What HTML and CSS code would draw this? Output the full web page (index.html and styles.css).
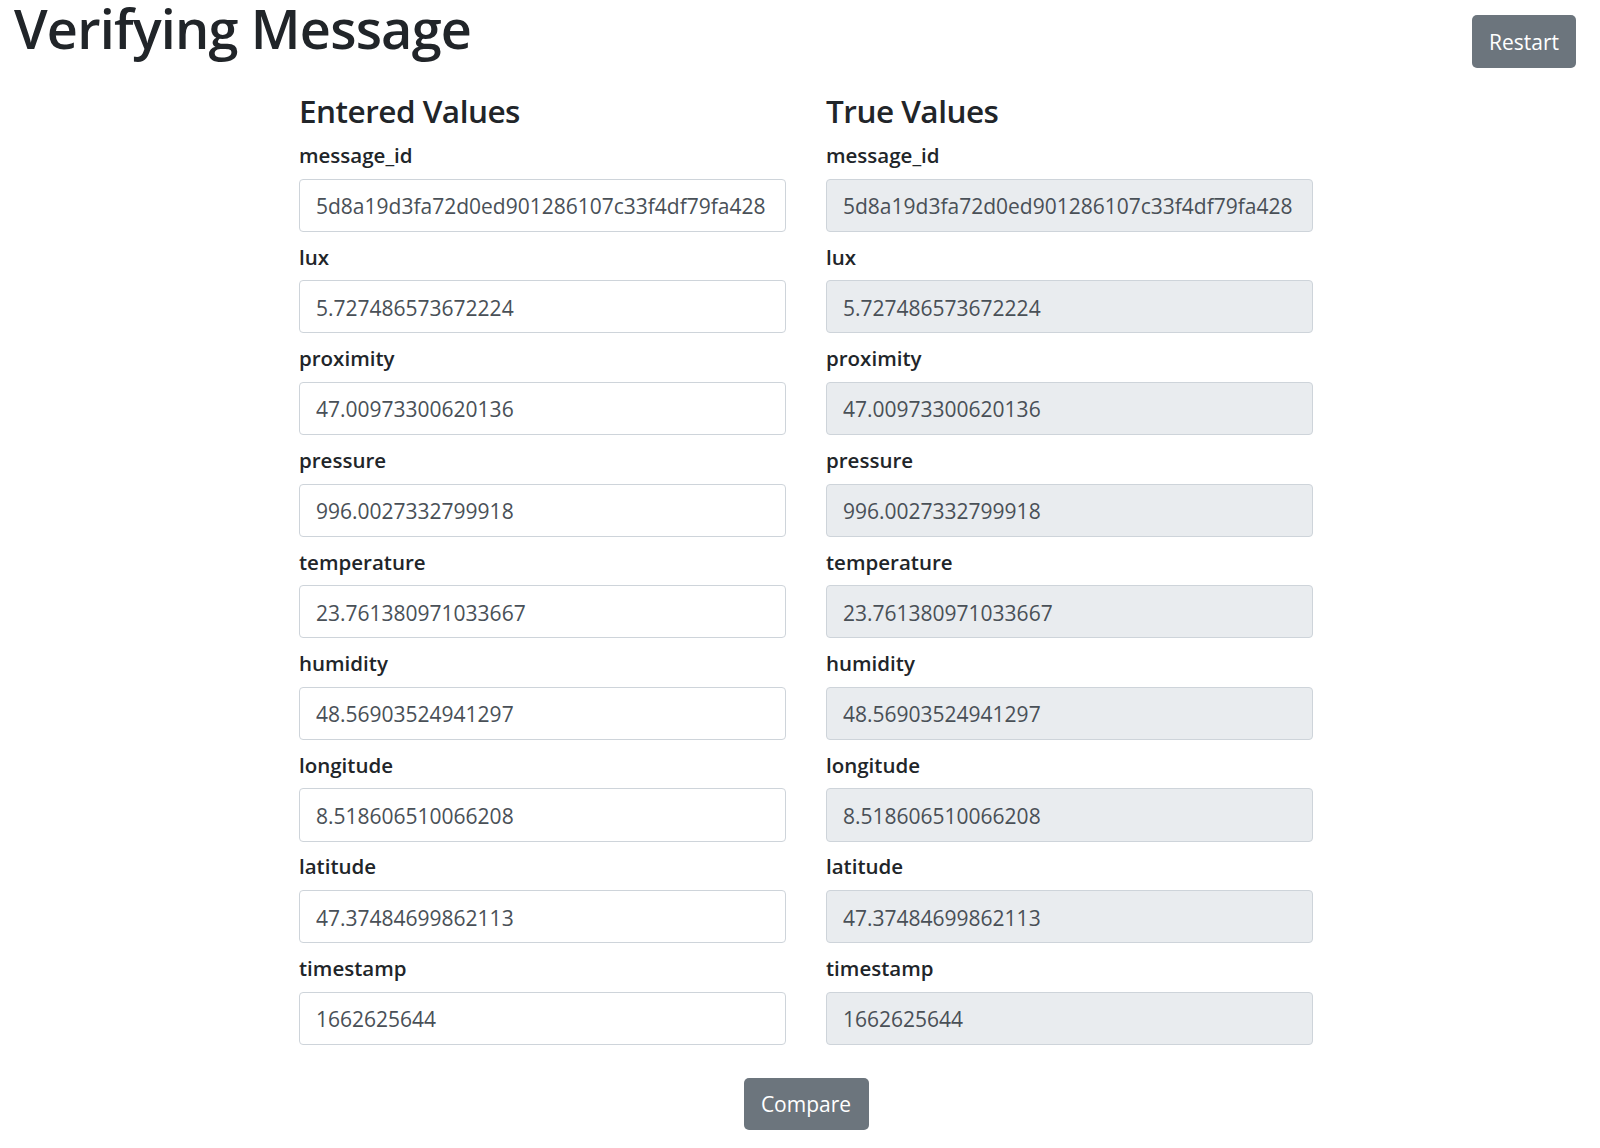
FILE: index.html
```html
<!DOCTYPE html>
<html lang="en">
<head>
<meta charset="utf-8">
<title>Verifying Message</title>
<link rel="stylesheet" href="styles.css">
</head>
<body>
<header class="topbar">
  <h1 class="title">Verifying Message</h1>
  <button class="btn btn-restart" type="button">Restart</button>
</header>
<main class="content">
  <div class="columns">
    <section class="col">
      <h4 class="col-title">Entered Values</h4>
      <div class="field"><label class="field-label">message_id</label><input class="field-input" type="text" value="5d8a19d3fa72d0ed901286107c33f4df79fa428"></div>
      <div class="field"><label class="field-label">lux</label><input class="field-input" type="text" value="5.727486573672224"></div>
      <div class="field"><label class="field-label">proximity</label><input class="field-input" type="text" value="47.00973300620136"></div>
      <div class="field"><label class="field-label">pressure</label><input class="field-input" type="text" value="996.0027332799918"></div>
      <div class="field"><label class="field-label">temperature</label><input class="field-input" type="text" value="23.761380971033667"></div>
      <div class="field"><label class="field-label">humidity</label><input class="field-input" type="text" value="48.56903524941297"></div>
      <div class="field"><label class="field-label">longitude</label><input class="field-input" type="text" value="8.518606510066208"></div>
      <div class="field"><label class="field-label">latitude</label><input class="field-input" type="text" value="47.37484699862113"></div>
      <div class="field"><label class="field-label">timestamp</label><input class="field-input" type="text" value="1662625644"></div>
    </section>
    <section class="col">
      <h4 class="col-title">True Values</h4>
      <div class="field"><label class="field-label">message_id</label><input class="field-input readonly" type="text" readonly value="5d8a19d3fa72d0ed901286107c33f4df79fa428"></div>
      <div class="field"><label class="field-label">lux</label><input class="field-input readonly" type="text" readonly value="5.727486573672224"></div>
      <div class="field"><label class="field-label">proximity</label><input class="field-input readonly" type="text" readonly value="47.00973300620136"></div>
      <div class="field"><label class="field-label">pressure</label><input class="field-input readonly" type="text" readonly value="996.0027332799918"></div>
      <div class="field"><label class="field-label">temperature</label><input class="field-input readonly" type="text" readonly value="23.761380971033667"></div>
      <div class="field"><label class="field-label">humidity</label><input class="field-input readonly" type="text" readonly value="48.56903524941297"></div>
      <div class="field"><label class="field-label">longitude</label><input class="field-input readonly" type="text" readonly value="8.518606510066208"></div>
      <div class="field"><label class="field-label">latitude</label><input class="field-input readonly" type="text" readonly value="47.37484699862113"></div>
      <div class="field"><label class="field-label">timestamp</label><input class="field-input readonly" type="text" readonly value="1662625644"></div>
    </section>
  </div>
  <div class="actions">
    <button class="btn btn-compare" type="button">Compare</button>
  </div>
</main>
</body>
</html>
```
FILE: styles.css
```css
* { box-sizing: border-box; }

body {
  margin: 0;
  font-family: "Open Sans", "Noto Sans", "Liberation Sans", sans-serif;
  color: #212529;
  background: #fff;
}

.topbar {
  display: flex;
  justify-content: space-between;
  align-items: flex-start;
  padding: 0 24px 0 14px;
}

.title {
  margin: 0;
  font-size: 54px;
  line-height: 56px;
  font-weight: 600;
  letter-spacing: -0.8px;
  color: #212529;
}

.btn {
  border: 0;
  border-radius: 5px;
  background: #6c757d;
  color: #fff;
  font-family: inherit;
  font-size: 21px;
  line-height: 1;
  cursor: pointer;
}

.btn-restart {
  margin-top: 15px;
  width: 104px;
  height: 53px;
  padding-top: 2px;
}

.content {
  width: 1014px;
  margin: 0 auto;
  padding-left: 12px;
  box-sizing: content-box;
}

.columns {
  display: grid;
  grid-template-columns: 487px 487px;
  column-gap: 40px;
  margin-top: 23px;
}

.col-title {
  margin: 0 0 6.4px;
  font-size: 31.5px;
  line-height: 40.3px;
  font-weight: 600;
  letter-spacing: -0.5px;
}

.field {
  display: flex;
  flex-direction: column;
  margin-bottom: 7.45px;
}

.field-label {
  font-size: 20.5px;
  line-height: 33.6px;
  font-weight: 600;
  padding-top: 1.5px;
  margin-bottom: 5.9px;
}

.field-input {
  height: 53.2px;
  width: 100%;
  padding: 2px 16px 0;
  border: 1px solid #ced4da;
  border-radius: 4px;
  background: #fff;
  color: #495057;
  font-family: inherit;
  font-size: 21px;
  outline: none;
}

.field-input.readonly {
  background: #e9ecef;
}

.actions {
  display: flex;
  justify-content: center;
  margin-top: 25.5px;
}

.btn-compare {
  width: 125px;
  height: 52px;
  padding-top: 2px;
}
```
